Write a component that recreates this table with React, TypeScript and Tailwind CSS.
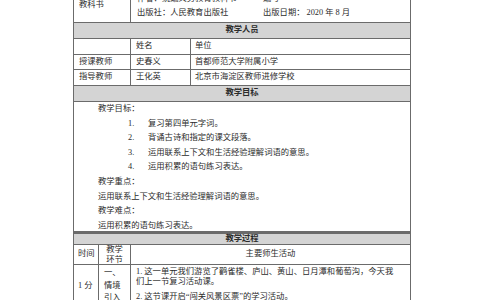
import React from 'react';

const line = 'border-[#6b6b6b]';

const Header = ({ title, h }: { title: string; h: string }) => (
  <div className={`${h} flex items-center justify-center border-b ${line} bg-[#d4d4d4] font-semibold`}>
    {title}
  </div>
);

const PersonRow = ({ a, b, c, h }: { a: string; b: string; c: string; h: string }) => (
  <div className={`${h} flex border-b ${line}`}>
    <div className={`w-[57px] shrink-0 border-r ${line} pl-[5px] flex items-center`}>{a}</div>
    <div className={`w-[60px] shrink-0 border-r ${line} pl-[5px] flex items-center`}>{b}</div>
    <div className="flex-1 pl-[4px] flex items-center">{c}</div>
  </div>
);

const goals = [
  '复习第四单元字词。',
  '背诵古诗和指定的课文段落。',
  '运用联系上下文和生活经验理解词语的意思。',
  '运用积累的语句练习表达。',
];

export default function App() {
  return (
    <div
      className="w-[484px] h-[300px] overflow-hidden bg-white text-[8.3px] text-[#2b2b2b]"
      style={{ fontFamily: '"Liberation Serif", "Noto Sans CJK SC", serif' }}
    >
      <div className={`ml-[73px] -mt-[11px] w-[338px] border-x ${line}`}>
        {/* 教科书 */}
        <div className={`h-[34px] flex border-b ${line}`}>
          <div className={`w-[57px] shrink-0 border-r ${line} pl-[5px] flex items-center`}>教科书</div>
          <div className="flex-1 pl-[6px] pt-[3px] leading-[14px]">
            <div className="flex">
              <span className="w-[126px]">作者：统编义务教育教科书</span>
              <span>编写</span>
            </div>
            <div className="flex">
              <span className="w-[126px]">出版社：人民教育出版社</span>
              <span>出版日期： 2020 年 8 月</span>
            </div>
          </div>
        </div>

        <Header title="教学人员" h="h-[16px]" />
        <PersonRow a="" b="姓名" c="单位" h="h-[16px]" />
        <PersonRow a="授课教师" b="史春义" c="首都师范大学附属小学" h="h-[15px]" />
        <PersonRow a="指导教师" b="王化英" c="北京市海淀区教师进修学校" h="h-[16px]" />
        <Header title="教学目标" h="h-[16px]" />

        {/* 目标内容 */}
        <div className={`h-[131px] pl-[24px] leading-[14.6px] border-b-2 ${line}`}>
          <div>教学目标：</div>
          {goals.map((g, i) => (
            <div key={i} className="flex pl-[30px]">
              <span className="w-[20px]">{i + 1}.</span>
              <span>{g}</span>
            </div>
          ))}
          <div>教学重点：</div>
          <div>运用联系上下文和生活经验理解词语的意思。</div>
          <div>教学难点：</div>
          <div>运用积累的语句练习表达。</div>
        </div>
      </div>

      {/* 教学过程 */}
      <div className={`ml-[73px] w-[338px] border-x border-t ${line}`}>
        <Header title="教学过程" h="h-[11px] leading-[10px]" />
        <div className={`h-[20px] flex border-b ${line}`}>
          <div className={`w-[25px] shrink-0 border-r ${line} pl-[4px] flex items-center`}>时间</div>
          <div className={`w-[32px] shrink-0 border-r ${line} flex flex-col items-center justify-center leading-[10px]`}>
            <span>教学</span>
            <span>环节</span>
          </div>
          <div className="flex-1 flex items-center justify-center">主要师生活动</div>
        </div>
        <div className="h-[60px] flex">
          <div className={`w-[25px] shrink-0 border-r ${line} pl-[4px] pt-[15px]`}>1 分</div>
          <div className={`w-[32px] shrink-0 border-r ${line} pl-[5px] pt-[2px] leading-[12.5px]`}>
            <div>一、</div>
            <div>情境</div>
            <div>引入</div>
          </div>
          <div className="flex-1 pl-[5px] pt-[2px] leading-[9.5px] whitespace-nowrap">
            <div>1. 这一单元我们游览了鹳雀楼、庐山、黄山、日月潭和葡萄沟，今天我</div>
            <div>们上一节复习活动课。</div>
            <div className="mt-[6px]">2. 这节课开启“闯关风景区票”的学习活动。</div>
          </div>
        </div>
      </div>
    </div>
  );
}
